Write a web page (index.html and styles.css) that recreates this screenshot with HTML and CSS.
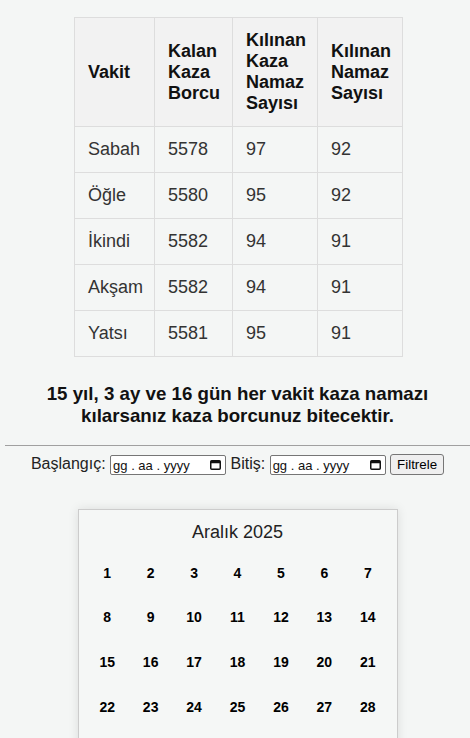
FILE: index.html
```html
<!DOCTYPE html>
<html lang="tr">
<head>
    <meta charset="UTF-8">
    <meta name="viewport" content="width=device-width, initial-scale=1.0">
    <title>Kaza Namazı Takibi</title>
    <link rel="stylesheet" href="styles.css">
</head>
<body>
    <table class="kaza-table">
        <colgroup>
            <col class="col-vakit">
            <col class="col-kalan">
            <col class="col-kaza">
            <col class="col-namaz">
        </colgroup>
        <thead>
            <tr>
                <th>Vakit</th>
                <th>Kalan Kaza Borcu</th>
                <th>Kılınan Kaza Namaz Sayısı</th>
                <th>Kılınan Namaz Sayısı</th>
            </tr>
        </thead>
        <tbody>
            <tr><td>Sabah</td><td>5578</td><td>97</td><td>92</td></tr>
            <tr><td>Öğle</td><td>5580</td><td>95</td><td>92</td></tr>
            <tr><td>İkindi</td><td>5582</td><td>94</td><td>91</td></tr>
            <tr><td>Akşam</td><td>5582</td><td>94</td><td>91</td></tr>
            <tr><td>Yatsı</td><td>5581</td><td>95</td><td>91</td></tr>
        </tbody>
    </table>

    <h3 class="summary">15 yıl, 3 ay ve 16 gün her vakit kaza namazı kılarsanız kaza borcunuz bitecektir.</h3>

    <hr class="divider">

    <form class="filter">
        <label>Başlangıç:</label>
        <span class="date-box">
            <span class="date-text">gg . aa . yyyy</span>
            <svg class="cal-icon" width="11" height="10" viewBox="0 0 11 10"><rect x="0.75" y="0.75" width="9.5" height="8.5" rx="1" fill="none" stroke="#111" stroke-width="1.5"/><rect x="0.75" y="0.75" width="9.5" height="2.5" fill="#111"/></svg>
        </span>
        <label>Bitiş:</label>
        <span class="date-box">
            <span class="date-text">gg . aa . yyyy</span>
            <svg class="cal-icon" width="11" height="10" viewBox="0 0 11 10"><rect x="0.75" y="0.75" width="9.5" height="8.5" rx="1" fill="none" stroke="#111" stroke-width="1.5"/><rect x="0.75" y="0.75" width="9.5" height="2.5" fill="#111"/></svg>
        </span>
        <button type="button" class="filter-button">Filtrele</button>
    </form>

    <div class="calendar">
        <div class="calendar-title">Aralık 2025</div>
        <div class="calendar-days">
            <span>1</span><span>2</span><span>3</span><span>4</span><span>5</span><span>6</span><span>7</span>
            <span>8</span><span>9</span><span>10</span><span>11</span><span>12</span><span>13</span><span>14</span>
            <span>15</span><span>16</span><span>17</span><span>18</span><span>19</span><span>20</span><span>21</span>
            <span>22</span><span>23</span><span>24</span><span>25</span><span>26</span><span>27</span><span>28</span>
            <span>29</span><span>30</span><span>31</span>
        </div>
    </div>
</body>
</html>
```

FILE: styles.css
```css
body {
    margin: 0 0 0 5px;
    font-family: "Liberation Sans", Arial, sans-serif;
    background-color: #f4f6f5;
    color: #222;
}

.kaza-table {
    border-collapse: collapse;
    table-layout: fixed;
    width: 328px;
    margin: 17px auto 0;
    font-size: 18px;
    position: relative;
    left: 1px;
}

.col-vakit { width: 80px; }
.col-kalan { width: 78px; }
.col-kaza { width: 85px; }
.col-namaz { width: 85px; }

.kaza-table th,
.kaza-table td {
    border: 1px solid #dddddd;
    padding: 12px 13px;
    text-align: left;
    vertical-align: middle;
}

.kaza-table th {
    background-color: #f2f2f2;
    color: #111;
    font-weight: bold;
}

.kaza-table td {
    color: #333;
}

.summary {
    margin: 26px 0 18px;
    padding: 0 20px;
    font-size: 18.72px;
    font-weight: bold;
    text-align: center;
    color: #111;
}

.divider {
    height: 0;
    margin: 0;
    border: none;
    border-top: 1px solid #a0a0a0;
}

.filter {
    margin-top: 7px;
    text-align: center;
    font-size: 16px;
    line-height: 22px;
}

.date-box {
    display: inline-flex;
    align-items: center;
    justify-content: space-between;
    box-sizing: border-box;
    width: 116px;
    height: 20px;
    padding: 0 4px 0 2px;
    vertical-align: middle;
    border: 1px solid #767676;
    border-radius: 2px;
    background-color: #fff;
    font-size: 13px;
    color: #111;
}

.date-text {
    position: relative;
    top: 1px;
}

.filter-button {
    height: 21px;
    padding: 1px 6px;
    vertical-align: middle;
    font-family: "Liberation Sans", Arial, sans-serif;
    font-size: 13.33px;
    color: #000;
    background-color: #efefef;
    border: 1px solid #767676;
    border-radius: 3px;
}

.calendar {
    box-sizing: border-box;
    width: 320px;
    margin: 34px auto 0;
    padding: 12px 7px 10px;
    border: 1px solid #cccccc;
    background-color: #f5f7f6;
    box-shadow: 0 0 10px rgba(0, 0, 0, 0.1);
}

.calendar-title {
    font-size: 18px;
    text-align: center;
    color: #222;
}

.calendar-days {
    display: grid;
    grid-template-columns: repeat(7, 1fr);
    grid-auto-rows: 44.7px;
    margin-top: 7px;
    align-items: center;
    text-align: center;
    font-size: 14px;
    font-weight: bold;
    color: #000;
}
```
